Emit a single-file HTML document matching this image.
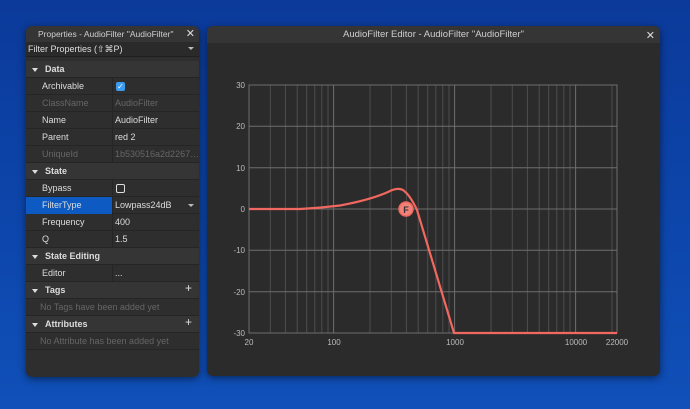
<!DOCTYPE html>
<html><head><style>
*{margin:0;padding:0;box-sizing:border-box}
body{width:690px;height:409px;overflow:hidden;background:linear-gradient(180deg,#0b3a9a 0%,#0d47ad 60%,#1050b8 100%);font-family:"Liberation Sans",sans-serif;position:relative}
.win{position:absolute;background:#2e2e2e;border-radius:6px;box-shadow:0 2px 8px rgba(0,0,0,.5);overflow:hidden}
.title{height:16px;background:#353535;color:#cfcfcf;font-size:9.5px;line-height:16px;text-align:center;position:relative}
.x{position:absolute;right:6px;top:0;font-size:11px;color:#ddd}
.row{position:absolute;left:0;width:173px;height:17px;font-size:9px;line-height:17px;color:#ddd;border-bottom:1px solid #252525}
.row .k{position:absolute;left:16px}
.row .v{position:absolute;left:89px}
.row .div{position:absolute;left:86px;top:0;bottom:0;width:1px;background:#252525}
.sec{background:#353535;font-weight:bold}
.sec .k{left:19px}
.tri{position:absolute;left:6px;top:7px;border-left:3px solid transparent;border-right:3px solid transparent;border-top:4px solid #ddd}
.dim{color:#666}
.plus{position:absolute;right:7px;top:-2px;font-size:12px;font-weight:normal}
</style></head><body>
<div class="win" style="left:26px;top:26px;width:173px;height:351px">
<div class="title" style="font-size:8.5px;text-align:left;padding-left:12px">Properties - AudioFilter "AudioFilter"<span class="x" style="right:4px">✕</span></div>
<div style="position:absolute;top:16px;left:0;width:173px;height:15px;background:#2a2a2a;border-bottom:1px solid #1f1f1f;color:#ddd;font-size:9px;line-height:15px;padding-left:2px">Filter Properties (⇧⌘P)<span style="position:absolute;right:5px;top:5px;border-left:3px solid transparent;border-right:3px solid transparent;border-top:3px solid #bbb"></span></div>
<div class="row sec" style="top:35px"><span class="tri"></span><span class="k">Data</span></div>
<div class="row" style="top:52px"><span class="k">Archivable</span><span class="div"></span><span style="position:absolute;left:90px;top:4px;width:9px;height:9px;background:#3a9bef;border-radius:2px;color:#fff;font-size:8px;line-height:9px;text-align:center">✓</span></div>
<div class="row dim" style="top:69px"><span class="k">ClassName</span><span class="div"></span><span class="v">AudioFilter</span></div>
<div class="row" style="top:86px"><span class="k">Name</span><span class="div"></span><span class="v">AudioFilter</span></div>
<div class="row" style="top:103px"><span class="k">Parent</span><span class="div"></span><span class="v">red 2</span></div>
<div class="row dim" style="top:120px"><span class="k">UniqueId</span><span class="div"></span><span class="v">1b530516a2d2267…</span></div>
<div class="row sec" style="top:137px"><span class="tri"></span><span class="k">State</span></div>
<div class="row" style="top:154px"><span class="k">Bypass</span><span class="div"></span><span style="position:absolute;left:90px;top:4px;width:9px;height:9px;border:1px solid #ddd;border-radius:2px"></span></div>
<div class="row" style="top:171px"><span style="position:absolute;left:0;top:0;width:86px;height:17px;background:#0d5ac2"></span><span class="k">FilterType</span><span class="div"></span><span class="v">Lowpass24dB</span><span style="position:absolute;right:5px;top:7px;border-left:3px solid transparent;border-right:3px solid transparent;border-top:3px solid #bbb"></span></div>
<div class="row" style="top:188px"><span class="k">Frequency</span><span class="div"></span><span class="v">400</span></div>
<div class="row" style="top:205px"><span class="k">Q</span><span class="div"></span><span class="v">1.5</span></div>
<div class="row sec" style="top:222px"><span class="tri"></span><span class="k">State Editing</span></div>
<div class="row" style="top:239px"><span class="k">Editor</span><span class="div"></span><span class="v">...</span></div>
<div class="row sec" style="top:256px"><span class="tri"></span><span class="k">Tags</span><span class="plus">+</span></div>
<div class="row dim" style="top:273px"><span class="k" style="left:14px">No Tags have been added yet</span></div>
<div class="row sec" style="top:290px"><span class="tri"></span><span class="k">Attributes</span><span class="plus">+</span></div>
<div class="row dim" style="top:307px"><span class="k" style="left:14px">No Attribute has been added yet</span></div>
</div>
<div class="win" style="left:207px;top:26px;width:453px;height:350px;background:#2b2b2b">
<div class="title" style="height:17px;line-height:17px;background:#353535">AudioFilter Editor - AudioFilter "AudioFilter"<span class="x" style="right:5px;top:2px">✕</span></div>
</div>
<svg style="position:absolute;left:0;top:0" width="690" height="409">
<g stroke="#4e4e4e" stroke-width="1">
<path d="M270.3 85V333M285.4 85V333M297.2 85V333M306.7 85V333M314.8 85V333M321.8 85V333M328 85V333M370 85V333M391.3 85V333M406.4 85V333M418.2 85V333M427.7 85V333M435.8 85V333M442.8 85V333M449 85V333M491 85V333M512.3 85V333M527.4 85V333M539.2 85V333M548.7 85V333M556.8 85V333M563.8 85V333M570 85V333M612 85V333"/>
</g>
<g stroke="#6e6e6e" stroke-width="1">
<path d="M333.6 85V333M454.6 85V333M575.6 85V333M249 126.3H617M249 167.7H617M249 209H617M249 250.3H617M249 291.7H617"/>
<rect x="249" y="85" width="368" height="248" fill="none"/>
</g>
<path d="M249 209L300 209Q320 208 340 205.5Q370 200 388 192Q397 187 403 190Q410 195 417 210L454 333L617 333" fill="none" stroke="#f0685f" stroke-width="2.2"/>
<circle cx="406" cy="209" r="7" fill="#f0827a" stroke="#f0685f" stroke-width="1.5"/>
<text x="406" y="213" font-size="9" font-weight="bold" fill="#333" text-anchor="middle" font-family="Liberation Sans">F</text>
<g font-size="8" fill="#bbb" font-family="Liberation Sans" text-anchor="end">
<text x="245" y="88">30</text><text x="245" y="129">20</text><text x="245" y="171">10</text><text x="245" y="212">0</text><text x="245" y="253">-10</text><text x="245" y="295">-20</text><text x="245" y="336">-30</text>
</g>
<g font-size="8" fill="#bbb" font-family="Liberation Sans" text-anchor="middle">
<text x="249" y="345">20</text><text x="334" y="345">100</text><text x="455" y="345">1000</text><text x="576" y="345">10000</text><text x="617" y="345">22000</text>
</g>
</svg>
</body></html>
